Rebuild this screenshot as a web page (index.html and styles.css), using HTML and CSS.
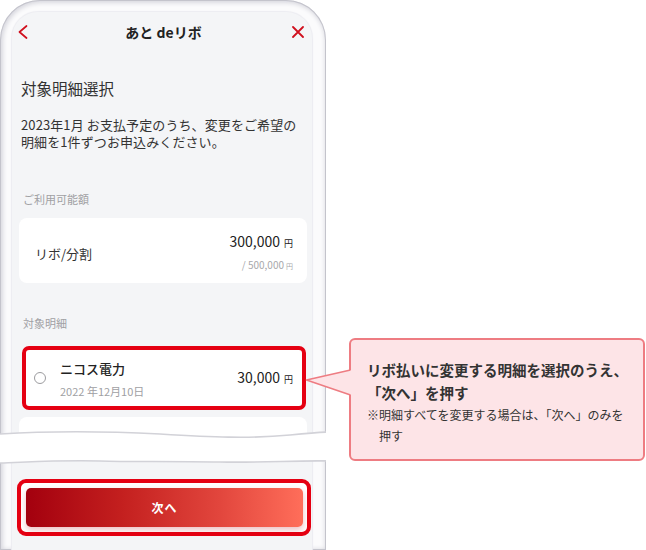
FILE: index.html
```html
<!DOCTYPE html>
<html lang="ja">
<head>
<meta charset="utf-8">
<title>あと deリボ</title>
<link rel="stylesheet" href="styles.css">
</head>
<body>
<div class="stage">
  <div class="phone">
    <div class="screen">
      <header class="appbar">
        <svg class="ic-back" width="10" height="14" viewBox="0 0 10 14"><polyline points="8.5,1 1.5,7 8.5,13" fill="none" stroke="#d0101e" stroke-width="1.7" stroke-linecap="round" stroke-linejoin="round"/></svg>
        <h1 class="appbar-title">あと deリボ</h1>
        <svg class="ic-close" width="12" height="12" viewBox="0 0 12 12"><path d="M1,1 L11,11 M11,1 L1,11" fill="none" stroke="#d0101e" stroke-width="1.8" stroke-linecap="round"/></svg>
      </header>
      <h2 class="page-title">対象明細選択</h2>
      <p class="lead"><span class="lead-line">2023年1月 お支払予定のうち、変更をご希望の</span><span class="lead-line">明細を1件ずつお申込みください。</span></p>
      <div class="section-label">ご利用可能額</div>
      <div class="card limit">
        <div class="limit-name">リボ/分割</div>
        <div class="limit-amounts">
          <div class="amount">300,000<span class="yen">円</span></div>
          <div class="amount-sub">/ 500,000<span class="yen-sub">円</span></div>
        </div>
      </div>
      <div class="section-label label-2">対象明細</div>
      <div class="item">
        <span class="radio"></span>
        <div class="item-body">
          <div class="item-name">ニコス電力</div>
          <div class="item-date">2022 年12月10日</div>
        </div>
        <div class="amount item-amount">30,000<span class="yen">円</span></div>
      </div>
      <div class="card next-card"></div>
      <div class="footer-box"><button class="next-btn" type="button">次へ</button></div>
    </div>
    <svg class="break" width="330" height="44" viewBox="0 0 330 44">
      <path d="M0,8 C50,5 100,5 160,8 C210,11 250,13 290,9 C310,7 320,6 330,6 L330,35 C300,34 260,37 220,36 C170,35 130,36 100,35 C60,34 30,36 0,37 Z" fill="#ffffff"/>
      <path d="M0,8 C50,5 100,5 160,8 C210,11 250,13 290,9 C310,7 320,6 330,6" fill="none" stroke="#d2d2d8" stroke-width="1.6"/>
      <path d="M0,37 C30,36 60,34 100,35 C130,36 170,35 220,36 C260,37 300,34 330,35" fill="none" stroke="#d2d2d8" stroke-width="1.6"/>
    </svg>
  </div>
  <div class="callout">
    <svg class="pointer" width="48" height="32" viewBox="0 0 48 32">
      <path d="M45,3 L1.5,13 L45,28 L48,28 L48,3 Z" fill="#fde4e7"/>
      <polyline points="45.5,3 1.5,13 45.5,28" fill="none" stroke="#ee7c82" stroke-width="1.6" stroke-linejoin="round"/>
    </svg>
    <p class="callout-main">リボ払いに変更する明細を選択のうえ、<br>「次へ」を押す</p>
    <p class="callout-note">※明細すべてを変更する場合は、「次へ」のみを<br>押す</p>
  </div>
</div>
</body>
</html>
```

FILE: styles.css
```css
* {
  box-sizing: border-box;
}

html, body {
  margin: 0;
  padding: 0;
}

body {
  width: 646px;
  height: 550px;
  overflow: hidden;
  background: #ffffff;
  font-family: "Noto Sans CJK JP", "Noto Sans", sans-serif;
  color: #333333;
}

.stage {
  display: flex;
  align-items: flex-start;
  height: 550px;
  overflow: hidden;
}

.phone {
  position: relative;
  flex: none;
  width: 326px;
  height: 550px;
  overflow: hidden;
  background: #fbfbfc;
  border-radius: 40px 40px 0 0;
  box-shadow: inset 0 0 0 1px #c4c4cc, inset 1px 1px 4px 2px #d8d8df;
  padding-top: 12px;
}

.screen {
  margin: 0 14px 0 12px;
  height: 538px;
  background: #f4f5f7;
  border-radius: 26px 26px 0 0;
  box-shadow: 0 0 1px 1px #ececf1;
}

.appbar {
  height: 40px;
  display: grid;
  grid-template-columns: 1fr auto 1fr;
  align-items: center;
}

.ic-back {
  margin-left: 6px;
  justify-self: start;
}

.ic-close {
  margin-right: 8px;
  justify-self: end;
}

.appbar-title {
  margin: 0;
  font-size: 14px;
  font-weight: 700;
  color: #222222;
  line-height: 20px;
  padding-left: 3px;
}

.page-title {
  margin: 25px 0 0 9px;
  font-size: 15.5px;
  font-weight: 400;
  line-height: 22px;
  color: #333333;
}

.lead {
  margin: 18px 0 0 9px;
  font-size: 13px;
  color: #333333;
}

.lead-line {
  display: block;
  line-height: 16.5px;
  letter-spacing: 0.1px;
}

.section-label {
  margin: 41px 0 0 11px;
  font-size: 11px;
  line-height: 16px;
  color: #a0a0a3;
}

.label-2 {
  margin-top: 32px;
}

.card {
  background: #ffffff;
  border-radius: 8px;
}

.limit {
  margin: 11px 5px 0 7px;
  height: 65px;
  padding: 15px 14px 8px 16px;
  display: flex;
  align-items: center;
  justify-content: space-between;
}

.limit-name {
  font-size: 13px;
  line-height: 20px;
}

.limit-amounts {
  text-align: right;
}

.amount {
  font-size: 14px;
  line-height: 20px;
  color: #222222;
}

.yen {
  font-size: 9px;
  margin-left: 4px;
}

.amount-sub {
  font-size: 10px;
  line-height: 22px;
  color: #a8a8ab;
}

.yen-sub {
  font-size: 7px;
  margin-left: 2px;
}

.item {
  margin: 15px 6px 0 10px;
  height: 64px;
  border: 4px solid #e50012;
  border-radius: 7px;
  background: #ffffff;
  padding: 0 9px 0 8px;
  display: flex;
  align-items: center;
}

.radio {
  flex: none;
  width: 12px;
  height: 12px;
  border: 1px solid #9c9c9f;
  border-radius: 50%;
  margin-right: 14px;
}

.item-body {
  align-self: flex-start;
  margin-top: 9px;
}

.item-name {
  font-size: 13px;
  line-height: 20px;
  font-weight: 500;
  color: #222222;
}

.item-date {
  margin-top: 2px;
  font-size: 11px;
  line-height: 20px;
  color: #a0a0a3;
}

.item-amount {
  margin-left: auto;
}

.next-card {
  margin: 7px 5px 0 7px;
  height: 40px;
}

.footer-box {
  margin: 22px 1px 0 5px;
  border: 4px solid #e50012;
  border-radius: 9px;
  background: #ffffff;
  padding: 5px 4px 5px 5px;
}

.next-btn {
  display: block;
  width: 100%;
  height: 39px;
  border: none;
  border-radius: 5px;
  background: linear-gradient(90deg, #a3000e 0%, #c4201f 35%, #e2463d 70%, #ff6e5a 100%);
  box-shadow: 0 3px 6px rgba(190, 30, 40, 0.28);
  color: #ffffff;
  font-family: "Noto Sans CJK JP", sans-serif;
  font-size: 12px;
  font-weight: 700;
  letter-spacing: 1px;
}

.break {
  position: absolute;
  left: 0;
  top: 426px;
}

.callout {
  position: relative;
  flex: none;
  width: 296px;
  height: 123px;
  margin: 338px 0 0 23px;
  border: 2px solid #ee7c82;
  border-radius: 6px;
  background: #fde4e7;
  padding: 18px 6px 0 16px;
}

.pointer {
  position: absolute;
  left: -46px;
  top: 27px;
}

.callout-main {
  margin: 0;
  font-size: 14.5px;
  line-height: 23px;
  font-weight: 700;
  color: #333333;
  white-space: nowrap;
}

.callout-note {
  margin: 0;
  font-size: 12px;
  line-height: 21px;
  color: #333333;
  padding-left: 12px;
  text-indent: -12px;
  white-space: nowrap;
}
```
